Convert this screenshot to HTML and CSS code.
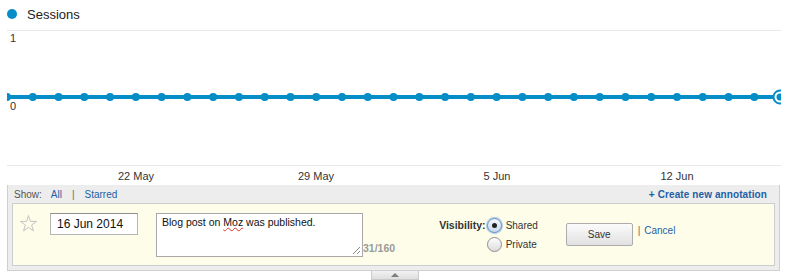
FILE: index.html
```html
<!DOCTYPE html>
<html lang="en">
<head>
    <meta charset="UTF-8">
    <meta name="viewport" content="width=device-width, initial-scale=1.0">
    <title>Sessions</title>
    <link rel="stylesheet" href="styles.css">
</head>
<body>
    <div class="legend">
        <span class="legend-dot"></span>
        <span class="legend-name">Sessions</span>
    </div>

    <svg class="chart" width="789" height="157" viewBox="0 0 789 157">
        <defs>
            <clipPath id="plot">
                <rect x="7" y="0" width="774" height="157"></rect>
            </clipPath>
        </defs>
        <line class="grid" x1="7" y1="2.5" x2="781" y2="2.5"></line>
        <line class="grid" x1="7" y1="137.5" x2="781" y2="137.5"></line>
        <text class="axis" x="10" y="14">1</text>
        <g clip-path="url(#plot)">
            <line class="series" x1="7" y1="69" x2="781" y2="69"></line>
            <line class="points" x1="7" y1="69" x2="781" y2="69"></line>
            <circle class="current-ring" cx="780" cy="69" r="6.5"></circle>
            <circle class="current-dot" cx="780" cy="69" r="3.5"></circle>
        </g>
        <text class="axis" x="10" y="82">0</text>
        <text class="axis" x="136" y="152" text-anchor="middle">22 May</text>
        <text class="axis" x="316" y="152" text-anchor="middle">29 May</text>
        <text class="axis" x="497" y="152" text-anchor="middle">5 Jun</text>
        <text class="axis" x="677" y="152" text-anchor="middle">12 Jun</text>
    </svg>

    <div class="annot">
        <div class="annot-head">
            <div class="show">
                Show:<a href="#" class="link">All</a><span class="sep">|</span><a href="#" class="link">Starred</a>
            </div>
            <a href="#" class="create">+ Create new annotation</a>
        </div>
        <div class="annot-body">
            <svg class="star" width="17" height="17" viewBox="0 0 17 17">
                <polygon points="8.5,0.5 10.4,6.4 16.6,6.4 11.6,10 13.5,15.9 8.5,12.3 3.5,15.9 5.4,10 0.4,6.4 6.6,6.4"></polygon>
            </svg>
            <input type="text" class="date" value="16 Jun 2014">
            <div class="note">
                Blog post on <span class="typo">Moz</span> was published.
                <svg class="grip" width="9" height="9" viewBox="0 0 9 9">
                    <line x1="1" y1="8" x2="8" y2="1"></line>
                    <line x1="5" y1="8" x2="8" y2="5"></line>
                </svg>
            </div>
            <div class="count">31/160</div>
            <div class="vis">
                <div class="vis-label">Visibility:</div>
                <div class="vis-opts">
                    <label class="opt"><span class="radio checked"></span>Shared</label>
                    <label class="opt"><span class="radio"></span>Private</label>
                </div>
            </div>
            <button class="save">Save</button>
            <div class="cancel"><span class="sep">|</span><a href="#" class="link">Cancel</a></div>
        </div>
    </div>
    <div class="tab"><span class="arrow"></span></div>
</body>
</html>
```

FILE: styles.css
```css
* {
    box-sizing: border-box;
}
body {
    margin: 0;
    font-family: "Liberation Sans", Arial, sans-serif;
    color: #333;
    background-color: #fff;
    width: 789px;
}
.legend {
    height: 28px;
    display: flex;
    align-items: center;
    padding-left: 7px;
}
.legend-dot {
    width: 10px;
    height: 10px;
    border-radius: 50%;
    background-color: #058dc7;
}
.legend-name {
    margin-left: 10px;
    font-size: 13px;
    color: #222;
}
.chart {
    display: block;
}
.grid {
    stroke: #e8e8e8;
    stroke-width: 1;
}
.axis {
    font-family: "Liberation Sans", Arial, sans-serif;
    font-size: 11px;
    fill: #333;
}
.series {
    stroke: #058dc7;
    stroke-width: 4;
}
.points {
    stroke: #058dc7;
    stroke-width: 8;
    stroke-linecap: round;
    stroke-dasharray: 0 25.77;
}
.current-ring {
    fill: #fff;
    stroke: #058dc7;
    stroke-width: 2;
}
.current-dot {
    fill: #058dc7;
}
.annot {
    margin: 0 9px 0 7px;
    background-color: #ededed;
    border: 1px solid #cfcfcf;
    border-top: none;
    padding: 0 4px 4px;
}
.annot-head {
    height: 18px;
    display: flex;
    align-items: center;
    justify-content: space-between;
    padding: 0 8px 0 2px;
    font-size: 10px;
}
.show {
    color: #555;
}
.link {
    color: #245fa5;
    text-decoration: none;
}
.show .link:first-child {
    margin-left: 9px;
}
.sep {
    color: #666;
    margin: 0 10px;
}
.create {
    color: #245fa5;
    font-weight: bold;
    text-decoration: none;
    letter-spacing: 0.1px;
}
.annot-body {
    height: 63px;
    border: 1px solid #cdcdcd;
    background-color: #fdfde9;
    display: flex;
    align-items: flex-start;
    padding: 9px 0 0 7px;
}
.star {
    margin-top: 2px;
    fill: none;
    stroke: #c4c4c4;
    stroke-width: 1;
}
.date {
    margin: 0 0 0 13px;
    width: 88px;
    height: 22px;
    border: 1px solid #b5b5b5;
    border-top-color: #8f8f8f;
    background-color: #fff;
    padding: 0 6px;
    font-family: "Liberation Sans", Arial, sans-serif;
    font-size: 12px;
    color: #111;
    outline: none;
}
.note {
    position: relative;
    margin-left: 18px;
    width: 207px;
    height: 44px;
    border: 1px solid #a9a9a9;
    background-color: #fff;
    padding: 2px 5px;
    font-size: 10.5px;
    line-height: 13px;
    color: #111;
}
.typo {
    text-decoration: underline wavy #e0302a;
    text-decoration-thickness: 1px;
}
.grip {
    position: absolute;
    right: 1px;
    bottom: 1px;
    stroke: #888;
    stroke-width: 1;
}
.count {
    margin-top: 29px;
    font-size: 10.5px;
    line-height: 13px;
    font-weight: bold;
    color: #9a9a9a;
}
.vis {
    margin-left: 44px;
    margin-top: 5px;
    display: flex;
}
.vis-label {
    font-size: 10.5px;
    font-weight: bold;
    line-height: 15px;
    color: #333;
    margin-right: 1px;
}
.vis-opts {
    width: 60px;
    display: flex;
    flex-direction: column;
    gap: 4px;
}
.opt {
    display: flex;
    align-items: center;
    height: 15px;
    font-size: 10px;
    color: #333;
}
.radio {
    width: 15px;
    height: 15px;
    margin-right: 4px;
    border-radius: 50%;
    border: 1px solid #8e8e8e;
    background: linear-gradient(#fdfdfd, #dcdcdc);
    display: flex;
    align-items: center;
    justify-content: center;
}
.radio.checked {
    border-color: #5b87bd;
    box-shadow: 0 0 1px 1px #a9c6e8;
    background: linear-gradient(#f4f8fd, #c9dbf1);
}
.radio.checked::after {
    content: "";
    width: 5px;
    height: 5px;
    border-radius: 50%;
    background-color: #222;
}
.save {
    margin-top: 10px;
    margin-left: 19px;
    width: 67px;
    height: 23px;
    border: 1px solid #acacac;
    border-radius: 2px;
    background: linear-gradient(#fbfbfb, #e1e1e1);
    font-family: "Liberation Sans", Arial, sans-serif;
    font-size: 10px;
    color: #333;
    padding: 0;
}
.cancel {
    margin-top: 12px;
    margin-left: 5px;
    font-size: 10px;
    line-height: 12px;
}
.cancel .sep {
    margin: 0 4px 0 0;
}
.tab {
    width: 48px;
    height: 9px;
    margin: 0 auto;
    border: 1px solid #cacaca;
    border-top: none;
    background: linear-gradient(#f2f2f2, #dedede);
    display: flex;
    justify-content: center;
    padding-top: 2px;
}
.arrow {
    width: 0;
    height: 0;
    border-left: 4px solid transparent;
    border-right: 4px solid transparent;
    border-bottom: 4px solid #7d7d7d;
}
```
